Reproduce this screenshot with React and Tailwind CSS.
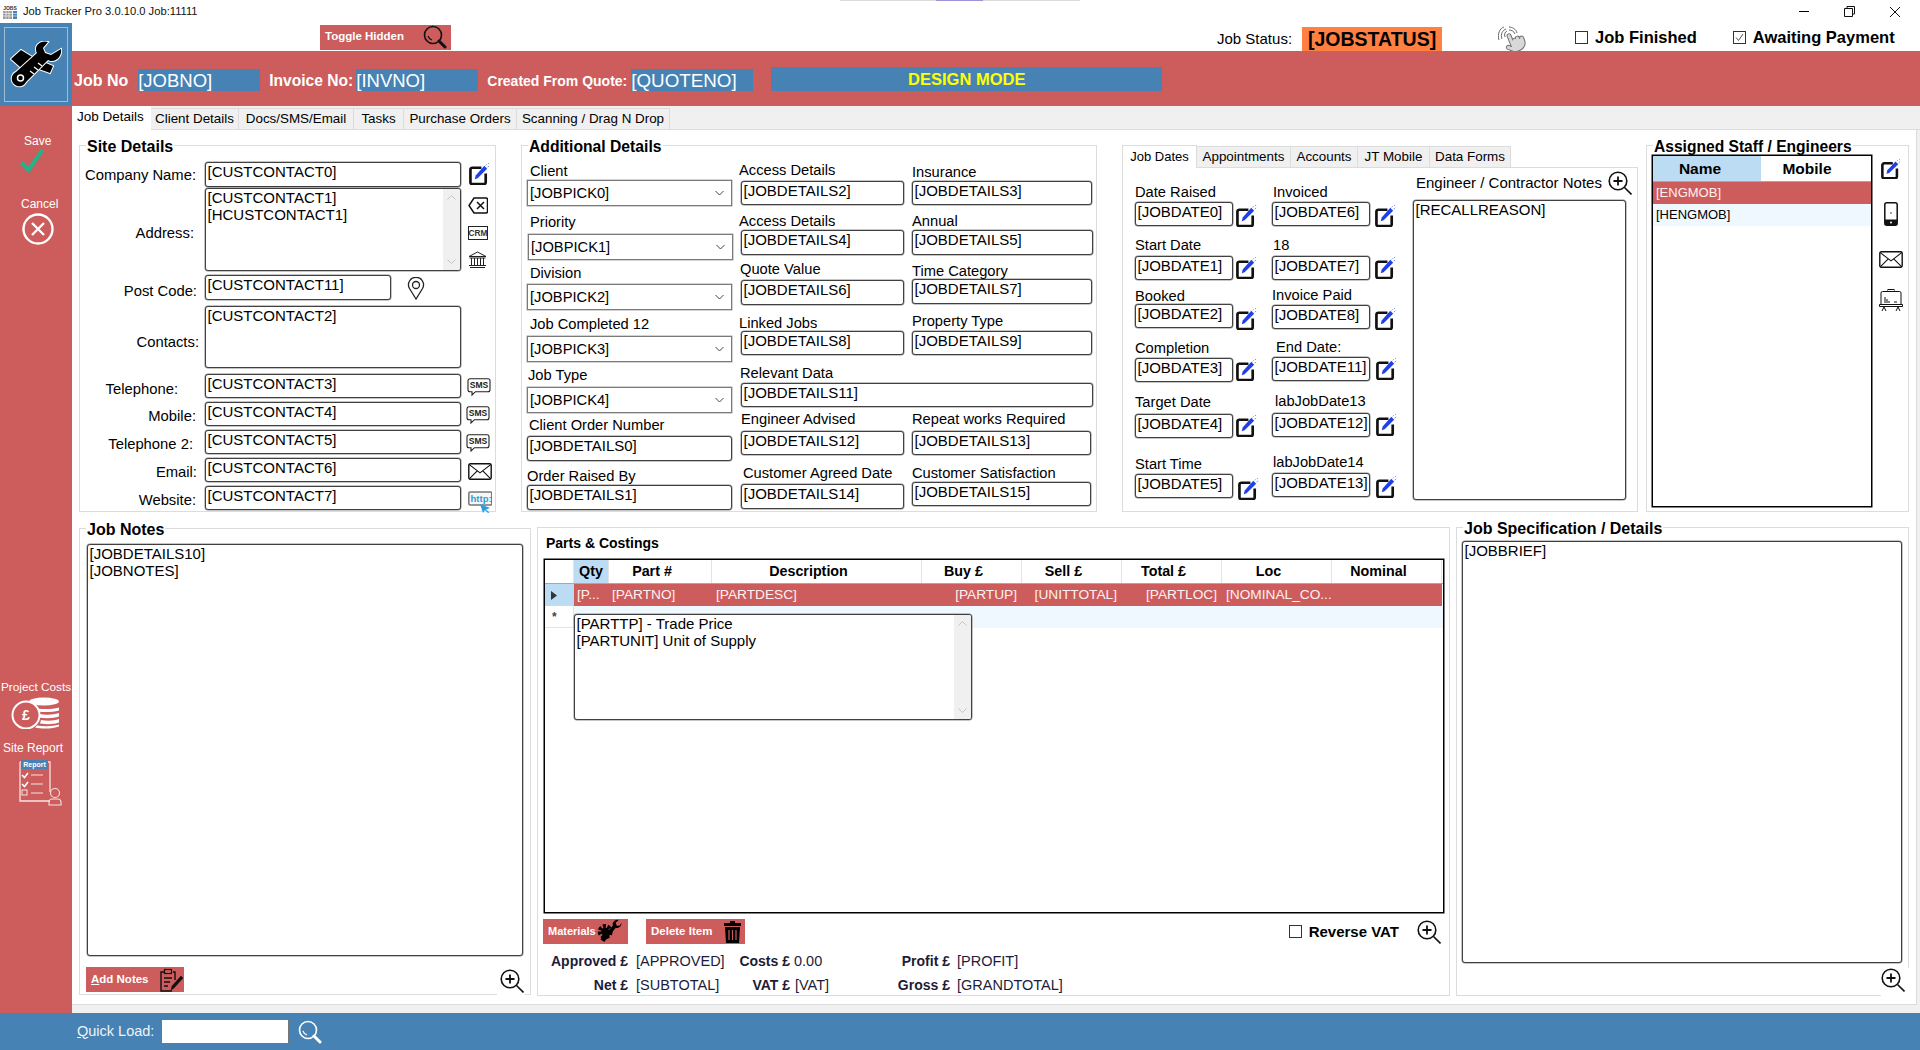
function EditIcon({ className = "h-[24px] w-[21px]" }) {
  return (
    <svg viewBox="0 0 22 24" preserveAspectRatio="none" className={`shrink-0 ${className}`}>
      <path d="M13 6H3.500A2 2 0 0 0 1.500 8v13a2 2 0 0 0 2 2h12a2 2 0 0 0 2-2V12" fill="none" stroke="#111" strokeWidth="2.800" />
      <path d="M6 18l1-4L16 4l3 3L9 17z" fill="#1f3fe8" />
      <path d="M17.500 3.500l1-1M19.500 5.500l1.500-1.500M20 2l1-1" stroke="#4a66f0" strokeWidth="0.800" />
    </svg>
  );
}

function ZoomPlus({ className = "" }) {
  return (
    <svg viewBox="0 0 24 24" className={`h-[24px] w-[24px] shrink-0 ${className}`} fill="none" stroke="#111">
      <circle cx="10" cy="10" r="8.800" strokeWidth="1.600" />
      <path d="M5.500 10h9M10 5.500v9" strokeWidth="1.800" />
      <path d="M16.500 16.500L23.500 23.500" strokeWidth="1.600" />
    </svg>
  );
}

function SearchIcon({ color = "#111", className = "" }) {
  return (
    <svg viewBox="0 0 24 24" className={`h-[24px] w-[24px] shrink-0 ${className}`} fill="none" stroke={color}>
      <circle cx="10" cy="10" r="8.500" strokeWidth="1.600" />
      <path d="M5 11a6 6 0 0 0 4 4" strokeWidth="1.200" />
      <path d="M16 16l6 6" strokeWidth="3" strokeLinecap="round" />
    </svg>
  );
}

function SmsIcon({ className = "" }) {
  return (
    <svg viewBox="0 0 24 18" className={`h-[18px] w-[24px] shrink-0 ${className}`}>
      <path d="M3 .7h18a2 2 0 0 1 2 2v9a2 2 0 0 1-2 2H8.500L5 17v-3.300H3a2 2 0 0 1-2-2v-9a2 2 0 0 1 2-2z" fill="#fff" stroke="#222" strokeWidth="1.100" />
      <text x="12" y="10.300" textAnchor="middle" fontSize="8.500" fontWeight="700" fontFamily="Liberation Sans" fill="#222">SMS</text>
    </svg>
  );
}

function Envelope({ className = "h-[18px] w-[24px]" }) {
  return (
    <svg viewBox="0 0 24 18" preserveAspectRatio="none" className={`shrink-0 ${className}`} fill="none" stroke="#111">
      <rect x="0.800" y="0.800" width="22.400" height="16.400" rx="1.500" strokeWidth="1.400" />
      <path d="M1 1.500l11 9 11-9M1 17l8.500-9M23 17l-8.500-9" strokeWidth="1.100" />
    </svg>
  );
}

function ScrollBar() {
  return (
    <div className="flex w-[17px] shrink-0 flex-col items-center justify-between bg-[#f0f0f0] py-[6px]">
      <svg viewBox="0 0 9 5" className="h-[5px] w-[9px]" fill="none" stroke="#c4c4c4" strokeWidth="1"><path d="M.5 4.500L4.500.5l4 4" /></svg>
      <svg viewBox="0 0 9 5" className="h-[5px] w-[9px]" fill="none" stroke="#c4c4c4" strokeWidth="1"><path d="M.5.5l4 4 4-4" /></svg>
    </div>
  );
}

function Box({ children, className = "", scroll = false }) {
  return (
    <div className={`flex shrink-0 overflow-hidden rounded-[3px] border border-[#404040] bg-white text-[15px] leading-[17px] shadow-[0_0_0_0.5px_#8c8c8c] ${className}`}>
      <div className="min-w-0 flex-1 whitespace-pre-line pl-[1.500px]">{children}</div>
      {scroll && <ScrollBar />}
    </div>
  );
}

function Select({ children, className = "" }) {
  return (
    <div className={`flex h-[26px] items-center justify-between border border-[#7a7a7a] bg-white pl-[2px] pr-[7px] text-[14.700px] shadow-[0_0_0_0.5px_#a8a8a8] ${className}`}>
      <span>{children}</span>
      <svg viewBox="0 0 9 6" className="h-[6px] w-[9px]" fill="none" stroke="#444" strokeWidth="1"><path d="M.5 1l4 4 4-4" /></svg>
    </div>
  );
}

function Label({ children, className = "" }) {
  return <div className={`h-[17px] whitespace-nowrap text-[14.700px] leading-[17px] ${className}`}>{children}</div>;
}

function Field({ label, labelClass, className = "", fieldClass = "", children }) {
  return (
    <div className={className}>
      <Label className={labelClass}>{label}</Label>
      <Box className={fieldClass}>{children}</Box>
    </div>
  );
}

function Pick({ label, labelClass, className = "", fieldClass = "", children }) {
  return (
    <div className={className}>
      <Label className={labelClass}>{label}</Label>
      <Select className={fieldClass}>{children}</Select>
    </div>
  );
}

function DateField({ label, labelClass, className = "", gap = "", iconClass = "ml-[3px]", children }) {
  return (
    <div className={className}>
      <Label className={labelClass}>{label}</Label>
      <div className={`flex h-[24px] items-start ${gap}`}>
        <Box className="h-[24px] w-[98px]">{children}</Box>
        <EditIcon className={`h-[23px] w-[21px] ${iconClass}`} />
      </div>
    </div>
  );
}

function SiteRow({ label, labelClass = "", className = "", fieldClass = "", value, scroll, children }) {
  return (
    <div className={`flex ${className}`}>
      <div className={`flex w-[125px] shrink-0 items-center justify-end whitespace-nowrap text-[14.800px] leading-[17px] ${labelClass}`}>{label}</div>
      <Box className={fieldClass} scroll={scroll}>{value}</Box>
      {children}
    </div>
  );
}

function Group({ title, titleClass = "text-[16px]", className = "", children }) {
  return (
    <div className={`shrink-0 border border-[#dcdcdc] bg-white ${className}`}>
      {title && <div className={`ml-[6px] -mt-[8px] h-[18px] w-fit whitespace-nowrap bg-white px-px font-bold leading-[18px] ${titleClass}`}>{title}</div>}
      {children}
    </div>
  );
}

function CheckBox({ checked = false, className = "" }) {
  return (
    <div className={`flex h-[13px] w-[13px] shrink-0 items-center justify-center border border-[#333] bg-white ${className}`}>
      {checked && <svg viewBox="0 0 11 11" className="h-[11px] w-[11px]" fill="none" stroke="#555" strokeWidth="1"><path d="M2 5.500l2.500 3L9 2" /></svg>}
    </div>
  );
}

function Logo() {
  return (
    <svg viewBox="0 0 52 48" className="h-[48px] w-[52px]">
      <g fill="#000" stroke="#fff" strokeWidth="2" paintOrder="stroke">
        <path d="M1 18L11 9l13 8 7 3 12 5-3 7-14-5-6 2-5 0-5-3z" />
        <path d="M51 8c1 6-3 12-9 12-2 0-3-.5-4-1L16 41a7.500 7.500 0 1 1-10-10L27 12c-1-1-1-3-1-4 0-5 6-9 12-7l-5 6 2 5 6 2z" />
      </g>
      <circle cx="10.500" cy="37" r="3" fill="none" stroke="#fff" strokeWidth="1.500" />
      <path d="M20 30l4 3M24 26l4 3M28 22l4 3" stroke="#fff" strokeWidth="1.200" />
    </svg>
  );
}

function Coins() {
  return (
    <svg viewBox="0 0 49 32" className="ml-[11px] h-[32px] w-[49px]">
      <ellipse cx="33" cy="4.500" rx="15" ry="4" fill="#fff" />
      <path d="M22 10.500c8 2 18 2 26 0v3c-8 2-18 2-26 0zM28 17c7 1 14 1 20-1v3.500c-6 2-13 2-20 1zM30 23c6 1 13 1 18-1v3.500c-5 2-12 2-19 1zM26 28.500c7 1 16 1 22-1v2c-5 2-16 3-24 1z" fill="#fff" />
      <circle cx="15" cy="18" r="13.500" fill="#cd5c5c" stroke="#fff" strokeWidth="2" />
      <text x="15" y="23" textAnchor="middle" fontSize="14" fontWeight="700" fontFamily="Liberation Sans" fill="#fff">£</text>
    </svg>
  );
}

function ReportIcon() {
  return (
    <svg viewBox="0 0 44 47" className="ml-[18px] h-[47px] w-[44px]" fill="none" stroke="#f5e3e3">
      <path d="M2 3h30v30M2 3v39h30" strokeWidth="1.300" />
      <rect x="3" y="1" width="27" height="9" fill="#4682b4" stroke="none" />
      <text x="16.500" y="8" textAnchor="middle" fontSize="7" fontWeight="700" fontFamily="Liberation Sans" fill="#fff" stroke="none">Report</text>
      <path d="M4 16l2.500 2.500L10 14M4 25l2.500 2.500L10 23" stroke="#fff" strokeWidth="1.600" />
      <path d="M13 16h12M13 25h12M13 34h12" strokeWidth="1" />
      <rect x="4" y="31" width="5" height="5" strokeWidth="1" />
      <circle cx="37" cy="34" r="4.500" strokeWidth="1.100" />
      <path d="M31 46v-3c0-2 2-3 3-3h6c1 0 3 1 3 3v3z" strokeWidth="1.100" />
    </svg>
  );
}

function HandIcon() {
  return (
    <svg viewBox="0 0 32 25" className="h-[25px] w-[32px] shrink-0">
      <g transform="translate(5 4) rotate(-22 12 12) scale(0.98)" fill="#d8d8d8" stroke="#6e6e6e" strokeWidth="1">
        <path d="M18 11a2 2 0 1 1 4 0v3a8 8 0 0 1-8 8h-2c-2.800 0-4.500-.86-5.990-2.340l-3.600-3.600a2 2 0 0 1 2.830-2.820L7 15V4a2 2 0 0 1 4 0v5a2 2 0 0 1 3 0 2 2 0 0 1 4 1z" />
      </g>
      <g fill="none" stroke="#666" strokeWidth="1">
        <path d="M1 14C-1 8 2 2 6 1M4 13C2 8 5 4 8 3M7 11c-1-3 0-5 2-6M11 1c3 0 7 2 8 6M11 4c2 0 5 1 6 4" />
      </g>
    </svg>
  );
}

function Tab({ children, className = "" }) {
  return <div className={`flex h-[21px] shrink-0 items-center justify-center whitespace-nowrap border border-b-0 border-l-0 border-[#dcdcdc] bg-[#f0f0f0] text-[13.400px] ${className}`}>{children}</div>;
}

const partColumns = [
  { name: "Qty", width: "w-[35px]", head: "bg-[#bcdcf4]", cell: "pl-[3px]", value: "[P..." },
  { name: "Part #", width: "w-[103px]", head: "pr-[16px]", cell: "pl-[3px]", value: "[PARTNO]" },
  { name: "Description", width: "w-[210px]", head: "pr-[16px]", cell: "pl-[4px]", value: "[PARTDESC]" },
  { name: "Buy £", width: "w-[100px]", head: "pr-[16px]", cell: "justify-end pr-[5px]", value: "[PARTUP]" },
  { name: "Sell £", width: "w-[100px]", head: "pr-[16px]", cell: "justify-end pr-[5px]", value: "[UNITTOTAL]" },
  { name: "Total £", width: "w-[100px]", head: "pr-[16px]", cell: "justify-end pr-[5px]", value: "[PARTLOC]" },
  { name: "Loc", width: "w-[110px]", head: "pr-[16px]", cell: "pl-[4px]", value: "[NOMINAL_CO..." },
  { name: "Nominal", width: "w-[110px]", head: "pr-[16px]", cell: "", value: "" },
];

function PartsGrid() {
  return (
    <div className="relative ml-[6px] mt-[7px] h-[354px] w-[900px] border border-black bg-white shadow-[0_0_0_0.5px_#000]">
      <div className="flex h-[24px] border-b border-[#a8a8a8]">
        <div className="w-[29px] shrink-0 border-r border-[#e4e4e4]" />
        {partColumns.map((col) => (
          <div key={col.name} className={`flex shrink-0 items-center justify-center border-r border-[#e4e4e4] text-[14.300px] font-bold ${col.width} ${col.head}`}>
            {col.name}
          </div>
        ))}
      </div>
      <div className="flex h-[22px] text-[13.700px] text-[#fdf2f2]">
        <div className="flex w-[29px] shrink-0 items-center bg-[#bcdcf4] pl-[6px]">
          <svg viewBox="0 0 6 9" className="h-[9px] w-[6px]"><path d="M0 0l6 4.500L0 9z" fill="#333" /></svg>
        </div>
        {partColumns.map((col) => (
          <div key={col.name} className={`flex shrink-0 items-center whitespace-nowrap bg-[#cd5c5c] ${col.width} ${col.cell}`}>
            {col.value}
          </div>
        ))}
      </div>
      <div className="flex h-[22px]">
        <div className="flex w-[29px] shrink-0 items-center border-b border-r border-[#e4e4e4] pl-[7px] text-[12px] font-bold text-[#444]">*</div>
        <div className="flex-1 bg-[#f0f8ff]" />
      </div>
      <Box scroll className="absolute left-[29px] top-[54px] h-[106px] w-[398px]">
        {"[PARTTP] - Trade Price\n[PARTUNIT] Unit of Supply"}
      </Box>
    </div>
  );
}

function Totals() {
  const labelClass = "flex items-center justify-end font-bold text-[14px]";
  return (
    <div className="mt-[5px] grid grid-cols-[85px_103px_59px_104px_56px_1fr] grid-rows-[24px_24px] text-[14.500px] text-[#1c1c3a]">
      <div className={labelClass}>Approved £</div>
      <div className="pl-[8px] leading-[24px]">[APPROVED]</div>
      <div className={labelClass}>Costs £</div>
      <div className="pl-[4px] leading-[24px]">0.00</div>
      <div className={labelClass}>Profit £</div>
      <div className="pl-[7px] leading-[24px]">[PROFIT]</div>
      <div className={labelClass}>Net £</div>
      <div className="pl-[8px] leading-[24px]">[SUBTOTAL]</div>
      <div className={labelClass}>VAT £</div>
      <div className="pl-[5px] leading-[24px]">[VAT]</div>
      <div className={labelClass}>Gross £</div>
      <div className="pl-[7px] leading-[24px]">[GRANDTOTAL]</div>
    </div>
  );
}

export default function App() {
  return (
    <div className="relative flex h-screen w-full flex-col overflow-hidden bg-white font-['Liberation_Sans',sans-serif] text-black">
      {/* title bar */}
      <div className="flex h-[23px] shrink-0 items-center">
        <svg viewBox="0 0 14 14" className="ml-[3px] h-[14px] w-[14px]">
          <text x="7" y="4.500" textAnchor="middle" fontSize="5" fontWeight="700" fontFamily="Liberation Sans" fill="#333">JOBS</text>
          <rect x="0" y="6" width="9" height="8" fill="#9a9a9a" />
          <rect x="10" y="6" width="4" height="8" fill="#4682b4" />
          <path d="M0 8.500h14M0 11h14M3 6v8M6 6v8" stroke="#fff" strokeWidth="0.600" />
        </svg>
        <span className="ml-[6px] text-[11.200px] text-[#111]">Job Tracker Pro 3.0.10.0 Job:11111</span>
        <div className="ml-auto flex items-center pr-[20px]">
          <div className="h-px w-[10px] bg-black" />
          <svg viewBox="0 0 11 11" className="ml-[35px] h-[11px] w-[11px]" fill="none" stroke="#111" strokeWidth="1">
            <path d="M3 2.500V.5h7.500v7.500H8.500M.5 2.500h8v8h-8z" />
          </svg>
          <svg viewBox="0 0 10 10" className="ml-[35px] h-[10px] w-[10px]" fill="none" stroke="#111" strokeWidth="1">
            <path d="M0 0l10 10M10 0L0 10" />
          </svg>
        </div>
      </div>
      <div className="absolute left-[840px] top-0 flex h-px w-[240px] bg-[#dcdcdc]">
        <div className="ml-[96px] w-[47px] bg-[#9a93d8]" />
      </div>

      <div className="flex min-h-0 flex-1">
        {/* left strip */}
        <div className="flex w-[72px] shrink-0 flex-col bg-[#cd5c5c] text-[12px] leading-[16px] text-white">
          <div className="h-[83px] shrink-0 bg-[#4682b4] p-[4px]">
            <div className="flex h-full w-full items-center justify-center border border-[#9dbcd6]">
              <Logo />
            </div>
          </div>
          <div className="ml-[24px] mt-[27px]">Save</div>
          <svg viewBox="0 0 24 24" className="ml-[20px] h-[24px] w-[24px]">
            <path d="M0 15l3-3 5 6L21 0l3 2L9 24z" fill="#1fb489" />
          </svg>
          <div className="ml-[21px] mt-[23px]">Cancel</div>
          <svg viewBox="0 0 32 32" className="ml-[22px] mt-px h-[32px] w-[32px]" fill="none" stroke="#fff">
            <circle cx="16" cy="16" r="14.500" strokeWidth="2.400" />
            <path d="M10 10l12 12M22 10L10 22" strokeWidth="2.400" />
          </svg>
          <div className="ml-px mt-[434px] whitespace-nowrap text-[11.800px]">Project Costs</div>
          <div className="mt-[2px]"><Coins /></div>
          <div className="ml-[3px] mt-[11px] whitespace-nowrap">Site Report</div>
          <div className="mt-[3px]"><ReportIcon /></div>
        </div>

        <div className="flex min-w-0 flex-1 flex-col bg-[#f0f0f0]">
          {/* toolbar */}
          <div className="flex h-[28px] shrink-0 items-start bg-white">
            <div className="ml-[248px] mt-[2px] flex h-[25px] w-[131px] items-center justify-between bg-[#cd5c5c] pb-[2px] pl-[5px] pr-[4px] text-[11.500px] font-bold text-white">
              <span>Toggle Hidden</span>
              <SearchIcon />
            </div>
            <span className="ml-[766px] mt-[7px] text-[15px] leading-[17px]">Job Status:</span>
            <div className="ml-[10px] mt-[4px] flex h-[24px] w-[140px] items-center justify-center bg-[#ff8040] text-[19.500px] font-bold leading-[24px]">[JOBSTATUS]</div>
            <div className="ml-[56px] mt-[3px]"><HandIcon /></div>
            <CheckBox className="ml-[45px] mt-[8px]" />
            <span className="ml-[7px] mt-[5px] whitespace-nowrap text-[16.500px] font-bold leading-[19px]">Job Finished</span>
            <CheckBox checked className="ml-[36px] mt-[8px]" />
            <span className="ml-[7px] mt-[5px] whitespace-nowrap text-[16.500px] font-bold leading-[19px]">Awaiting Payment</span>
          </div>

          {/* red header */}
          <div className="flex h-[55px] shrink-0 items-start bg-[#cd5c5c] pt-[18px] text-white">
            <span className="ml-[2px] mt-[2px] text-[16px] font-bold leading-[20px]">Job No</span>
            <div className="ml-[10px] h-[22px] w-[122px] bg-[#4682b4] text-[18.500px] leading-[24px]">[JOBNO]</div>
            <span className="ml-[9px] mt-[2px] text-[15.600px] font-bold leading-[20px]">Invoice No:</span>
            <div className="ml-[3px] h-[22px] w-[122px] bg-[#4682b4] text-[18.500px] leading-[24px]">[INVNO]</div>
            <span className="ml-[9px] mt-[2px] text-[14px] font-bold leading-[20px]">Created From Quote:</span>
            <div className="ml-[4px] h-[22px] w-[122px] bg-[#4682b4] text-[18.800px] leading-[24px]">[QUOTENO]</div>
            <div className="ml-[18px] -mt-[2px] flex h-[24px] w-[391px] items-center justify-center bg-[#4682b4] text-[16.500px] font-bold text-[#ffff00]">DESIGN MODE</div>
          </div>

          {/* main tabs */}
          <div className="flex h-[24px] shrink-0 items-end border-b border-[#dcdcdc]">
            <div className="z-10 -mb-px flex h-[24px] w-[79px] items-center bg-white pb-[2px] pl-[5px] text-[13.500px]">Job Details</div>
            <Tab className="w-[88px]">Client Details</Tab>
            <Tab className="w-[115px]">Docs/SMS/Email</Tab>
            <Tab className="w-[50px]">Tasks</Tab>
            <Tab className="w-[113px]">Purchase Orders</Tab>
            <Tab className="w-[153px]">Scanning / Drag N Drop</Tab>
          </div>

          {/* page body */}
          <div className="mb-[8px] mr-[3px] min-h-0 flex-1 border-b border-r border-[#dcdcdc] bg-white pl-[7px] pt-[15px]">
            <div className="flex h-[367px] items-start">
              <Group title="Site Details" className="h-[367px] w-[417px]">
                <SiteRow label="Company Name:" labelClass="pr-[9px] pt-[1px]" className="mt-[6px]" fieldClass="h-[25px] w-[256px]" value="[CUSTCONTACT0]">
                  <EditIcon className="ml-[8px] h-[23px] w-[21px]" />
                </SiteRow>
                <SiteRow label="Address:" labelClass="pr-[11px] pt-[8px]" className="mt-px h-[83px]" fieldClass="h-[83px] w-[256px]" scroll value={"[CUSTCONTACT1]\n[HCUSTCONTACT1]"}>
                  <div className="ml-[7px] mt-[9px] flex h-[83px] flex-col">
                    <svg viewBox="0 0 20 17" className="h-[17px] w-[20px]" fill="none" stroke="#111" strokeWidth="1.500">
                      <path d="M6 1h12a1.500 1.500 0 0 1 1.500 1.500v12A1.500 1.500 0 0 1 18 16H6L1 8.500z" />
                      <path d="M9 5l7 7M16 5l-7 7" />
                    </svg>
                    <svg viewBox="0 0 20 14" className="mt-[12px] h-[14px] w-[20px]">
                      <rect x="0.500" y="0.500" width="19" height="13" fill="#fff" stroke="#222" />
                      <text x="10" y="10" textAnchor="middle" fontSize="8.300" fontWeight="700" fontFamily="Liberation Sans" fill="#333">CRM</text>
                    </svg>
                    <svg viewBox="0 0 19 17" className="mt-[11px] h-[17px] w-[19px]" fill="none" stroke="#222" strokeWidth="1">
                      <path d="M1 5.500L9.500 1 18 5.500zM1.500 7h16M2 16.500h15M1 14.500h17" />
                      <path d="M3.500 7v7.500M6.500 7v7.500M9.500 7v7.500M12.500 7v7.500M15.500 7v7.500" />
                    </svg>
                  </div>
                </SiteRow>
                <SiteRow label="Post Code:" labelClass="pr-[8px] pt-[8px]" className="mt-[4px] h-[25px]" fieldClass="h-[25px] w-[186px]" value="[CUSTCONTACT11]">
                  <svg viewBox="0 0 18 23" className="ml-[16px] mt-[2px] h-[23px] w-[18px]" fill="none" stroke="#222" strokeWidth="1.300">
                    <path d="M9 22L2.500 11.500a7.500 7.500 0 1 1 13 0z" />
                    <circle cx="9" cy="8" r="3.500" />
                  </svg>
                </SiteRow>
                <SiteRow label="Contacts:" labelClass="pr-[6px] pt-[10px]" className="mt-[6px]" fieldClass="h-[62px] w-[256px]" value="[CUSTCONTACT2]" />
                <SiteRow label="Telephone:" labelClass="pr-[27px] pt-[6px]" className="mt-[6px] h-[24px]" fieldClass="h-[24px] w-[256px]" value="[CUSTCONTACT3]">
                  <SmsIcon className="ml-[6px] mt-[4px]" />
                </SiteRow>
                <SiteRow label="Mobile:" labelClass="pr-[9px] pt-[4px]" className="mt-[4px] h-[24px]" fieldClass="h-[24px] w-[256px]" value="[CUSTCONTACT4]">
                  <SmsIcon className="ml-[5px] mt-[4px]" />
                </SiteRow>
                <SiteRow label="Telephone 2:" labelClass="pr-[12px] pt-[4px]" className="mt-[4px] h-[24px]" fieldClass="h-[24px] w-[256px]" value="[CUSTCONTACT5]">
                  <SmsIcon className="ml-[5px] mt-[4px]" />
                </SiteRow>
                <SiteRow label="Email:" labelClass="pr-[8px] pt-[4px]" className="mt-[4px] h-[24px]" fieldClass="h-[24px] w-[256px]" value="[CUSTCONTACT6]">
                  <Envelope className="ml-[7px] mt-[5px] h-[17px] w-[24px]" />
                </SiteRow>
                <SiteRow label="Website:" labelClass="pr-[9px] pt-[4px]" className="mt-[4px] h-[24px]" fieldClass="h-[24px] w-[256px]" value="[CUSTCONTACT7]">
                  <svg viewBox="0 0 24 22" className="ml-[7px] mt-[5px] h-[22px] w-[24px]">
                    <rect x="0.800" y="1" width="23" height="13" rx="1.500" fill="#f6f6f6" stroke="#777" strokeWidth="1.500" />
                    <text x="2.500" y="11" fontSize="9.500" fontWeight="700" fontFamily="Liberation Sans" fill="#2a9de0">http:</text>
                    <path d="M12 13l10 4-4 1.500 3.500 3-1.500 .5-3-3-2 3z" fill="#2a9de0" />
                  </svg>
                </SiteRow>
              </Group>

              <Group title="Additional Details" titleClass="text-[15.700px]" className="ml-[25px] flex h-[367px] w-[576px] flex-wrap content-start">
                <div className="w-full" />
                <div className="ml-[5px] w-[206px]">
                  <Pick label="Client" labelClass="pl-[3px]" className="mt-[7px]" fieldClass="w-[205px]">[JOBPICK0]</Pick>
                  <Pick label="Priority" labelClass="pl-[3px]" className="mt-[8px]" fieldClass="ml-px mt-[3px] w-[205px]">[JOBPICK1]</Pick>
                  <Pick label="Division" labelClass="pl-[3px]" className="mt-[5px]" fieldClass="mt-[2px] w-[205px]">[JOBPICK2]</Pick>
                  <Pick label="Job Completed 12" labelClass="pl-[3px]" className="mt-[6px]" fieldClass="mt-[3px] h-[25px] w-[205px]">[JOBPICK3]</Pick>
                  <Pick label="Job Type" labelClass="pl-px" className="mt-[5px]" fieldClass="mt-[3px] h-[25px] w-[205px]">[JOBPICK4]</Pick>
                  <Field label="Client Order Number" labelClass="pl-[2px]" className="mt-[4px]" fieldClass="mt-[2px] h-[25px] w-[205px]">[JOBDETAILS0]</Field>
                  <Field label="Order Raised By" className="mt-[7px]" fieldClass="h-[25px] w-[205px]">[JOBDETAILS1]</Field>
                </div>
                <div className="ml-[8px] w-[352px]">
                  <div className="flex">
                    <div className="w-[171px]">
                      <Field label="Access Details" labelClass="-ml-[2px]" className="mt-[6px]" fieldClass="mt-[2px] h-[24px] w-[163px]">[JOBDETAILS2]</Field>
                      <Field label="Access Details" labelClass="-ml-[2px]" className="mt-[8px]" fieldClass="h-[25px] w-[163px]">[JOBDETAILS4]</Field>
                      <Field label="Quote Value" labelClass="-ml-px" className="mt-[6px]" fieldClass="mt-[2px] h-[25px] w-[163px]">[JOBDETAILS6]</Field>
                      <Field label="Linked Jobs" labelClass="-ml-[2px]" className="mt-[10px]" fieldClass="-mt-px h-[24px] w-[163px]">[JOBDETAILS8]</Field>
                    </div>
                    <div className="w-[181px]">
                      <Field label="Insurance" className="mt-[8px]" fieldClass="h-[24px] w-[180px]">[JOBDETAILS3]</Field>
                      <Field label="Annual" className="mt-[8px]" fieldClass="h-[25px] w-[181px]">[JOBDETAILS5]</Field>
                      <Field label="Time Category" className="mt-[8px]" fieldClass="-mt-px h-[25px] w-[180px]">[JOBDETAILS7]</Field>
                      <Field label="Property Type" className="mt-[9px]" fieldClass="mt-px h-[24px] w-[180px]">[JOBDETAILS9]</Field>
                    </div>
                  </div>
                  <Field label="Relevant Data" labelClass="-ml-px" className="mt-[10px]" fieldClass="mt-px h-[24px] w-[352px]">[JOBDETAILS11]</Field>
                  <div className="flex">
                    <div className="w-[171px]">
                      <Field label="Engineer Advised" className="mt-[4px]" fieldClass="mt-[3px] h-[24px] w-[163px]">[JOBDETAILS12]</Field>
                      <Field label="Customer Agreed Date" labelClass="ml-[2px]" className="mt-[10px]" fieldClass="mt-[2px] h-[25px] w-[163px]">[JOBDETAILS14]</Field>
                    </div>
                    <div className="w-[181px]">
                      <Field label="Repeat works Required" className="mt-[4px]" fieldClass="mt-[3px] h-[24px] w-[179px]">[JOBDETAILS13]</Field>
                      <Field label="Customer Satisfaction" className="mt-[10px]" fieldClass="h-[24px] w-[179px]">[JOBDETAILS15]</Field>
                    </div>
                  </div>
                </div>
              </Group>

              <div className="ml-[25px] flex h-[367px] w-[516px] shrink-0 flex-col">
                <div className="flex h-[22px] shrink-0 items-end">
                  <div className="z-10 -mb-px flex h-[23px] w-[75px] items-center justify-center border border-b-0 border-[#dcdcdc] bg-white text-[13px]">Job Dates</div>
                  <Tab className="w-[94px]">Appointments</Tab>
                  <Tab className="w-[67px]">Accounts</Tab>
                  <Tab className="w-[72px]">JT Mobile</Tab>
                  <Tab className="w-[81px]">Data Forms</Tab>
                </div>
                <div className="flex min-h-0 flex-1 border border-[#dcdcdc] bg-white pl-[12px]">
                  <div className="w-[137px] shrink-0">
                    <DateField label="Date Raised" className="mt-[16px]" gap="mt-px" iconClass="ml-[3px] mt-[2px]">[JOBDATE0]</DateField>
                    <DateField label="Start Date" className="mt-[11px]" gap="mt-[2px]" iconClass="ml-[3px]">[JOBDATE1]</DateField>
                    <DateField label="Booked" className="mt-[8px]" gap="-mt-px" iconClass="ml-[3px] mt-[3px]">[JOBDATE2]</DateField>
                    <DateField label="Completion" className="mt-[12px]" gap="mt-px" iconClass="ml-[3px]">[JOBDATE3]</DateField>
                    <DateField label="Target Date" className="mt-[12px]" gap="mt-[3px]" iconClass="ml-[3px]">[JOBDATE4]</DateField>
                    <DateField label="Start Time" className="mt-[18px]" gap="mt-px" iconClass="ml-[5px] mt-[3px]">[JOBDATE5]</DateField>
                  </div>
                  <div className="w-[141px] shrink-0">
                    <DateField label="Invoiced" labelClass="ml-px" className="mt-[16px]" gap="mt-px" iconClass="ml-[5px] mt-[2px]">[JOBDATE6]</DateField>
                    <DateField label="18" labelClass="ml-px" className="mt-[11px]" gap="mt-[2px]" iconClass="ml-[5px]">[JOBDATE7]</DateField>
                    <DateField label="Invoice Paid" className="mt-[7px]" gap="mt-px" iconClass="ml-[5px] mt-[2px]">[JOBDATE8]</DateField>
                    <DateField label="End Date:" labelClass="ml-[4px]" className="mt-[10px]" gap="mt-px" iconClass="ml-[6px]">[JOBDATE11]</DateField>
                    <DateField label="labJobDate13" labelClass="ml-[3px]" className="mt-[12px]" gap="mt-[3px]" iconClass="ml-[6px]">[JOBDATE12]</DateField>
                    <DateField label="labJobDate14" labelClass="ml-px" className="mt-[17px]" gap="mt-[2px]" iconClass="ml-[6px] mt-[2px]">[JOBDATE13]</DateField>
                  </div>
                  <div className="w-[214px] shrink-0">
                    <div className="mt-[3px] flex h-[24px] w-[219px] items-center justify-between pl-[3px]">
                      <span className="whitespace-nowrap text-[15px]">Engineer / Contractor Notes</span>
                      <ZoomPlus />
                    </div>
                    <Box className="mt-[5px] h-[300px] w-[213px]">[RECALLREASON]</Box>
                  </div>
                </div>
              </div>

              <Group title="Assigned Staff / Engineers" titleClass="text-[15.600px]" className="ml-[8px] flex h-[367px] w-[263px] flex-wrap content-start">
                <div className="w-full" />
                <div className="ml-[5px] -mt-px flex h-[352px] w-[220px] flex-col border border-black shadow-[0_0_0_0.5px_#000]">
                  <div className="flex h-[26px] shrink-0 border-b border-[#a8a8a8] text-[15.500px] font-bold">
                    <div className="flex w-[108px] items-center justify-center bg-[#bcdcf4] pr-[14px]">Name</div>
                    <div className="flex flex-1 items-center justify-center pr-[18px]">Mobile</div>
                  </div>
                  <div className="flex h-[22px] items-center bg-[#cd5c5c] pl-[3px] text-[13px] text-[#fdf2f2]">[ENGMOB]</div>
                  <div className="flex h-[22px] items-center bg-[#f0f8ff] pl-[3px] text-[13px]">[HENGMOB]</div>
                </div>
                <div className="ml-[7px] flex -mt-[2px] w-[24px] flex-col items-center">
                  <EditIcon className="mt-[4px] h-[21px] w-[20px]" />
                  <svg viewBox="0 0 14 24" className="mt-[23px] h-[24px] w-[14px]">
                    <rect x="0.800" y="0.800" width="12.400" height="22.400" rx="2" fill="#fff" stroke="#111" strokeWidth="1.500" />
                    <rect x="1" y="17.500" width="12" height="5.500" fill="#111" />
                    <circle cx="7" cy="20.500" r="1" fill="#fff" />
                    <path d="M6 11h2" stroke="#111" strokeWidth="0.800" />
                  </svg>
                  <Envelope className="mt-[25px] h-[17px] w-[24px]" />
                  <svg viewBox="0 0 24 23" className="mt-[21px] h-[23px] w-[24px]" fill="none" stroke="#111" strokeWidth="1">
                    <path d="M2 15V4a1.500 1.500 0 0 1 1.500-1.500h17A1.500 1.500 0 0 1 22 4v11M.5 15.500h23v2h-23z" />
                    <rect x="9" y="0.500" width="6" height="2" />
                    <path d="M6 14V8M8 14v-4M10 14v-2M15 13h3M5 18l-2 4M5 18l2 4M19 18l-2 4M19 18l2 4" />
                  </svg>
                </div>
              </Group>
            </div>

            <div className="mt-[15px] flex items-start">
              <Group title="Job Notes" className="mt-px h-[467px] w-[452px]">
                <Box className="ml-[7px] mt-[5px] h-[412px] w-[436px]">{"[JOBDETAILS10]\n[JOBNOTES]"}</Box>
                <div className="ml-[6px] mt-[11px] flex items-start justify-between pr-[5px]">
                  <div className="flex h-[25px] w-[98px] items-center bg-[#cd5c5c] pl-[5px] text-[11.500px] font-bold text-white">
                    <span><span className="underline">A</span>dd Notes</span>
                    <svg viewBox="0 0 24 24" className="ml-[10px] h-[24px] w-[24px] shrink-0" fill="none" stroke="#111">
                      <path d="M14 4h2v8M6 4H2v19h11" strokeWidth="1.400" />
                      <rect x="5.500" y="1.500" width="7" height="4" strokeWidth="1.200" />
                      <path d="M5 10h8M5 14h6M5 18h4" strokeWidth="1.300" />
                      <path d="M12 22l1-4 9-10 2 2-9 10z" fill="#111" strokeWidth="0.500" />
                    </svg>
                  </div>
                  <div className="z-10 mt-[2px] h-[30px] w-[28px] bg-white"><ZoomPlus className="ml-[3px]" /></div>
                </div>
              </Group>

              <Group className="ml-[6px] h-[469px] w-[913px]">
                <div className="ml-[8px] mt-[7px] h-[17px] text-[14px] font-bold leading-[17px]">Parts &amp; Costings</div>
                <PartsGrid />
                <div className="ml-[5px] mt-[6px] flex h-[25px] items-start">
                  <div className="flex h-[25px] w-[85px] items-center bg-[#cd5c5c] pl-[5px] text-[11px] font-bold text-white">
                    <span>Materials</span>
                    <svg viewBox="0 0 27 26" className="h-[25px] w-[27px] shrink-0">
                      <circle cx="9" cy="13" r="5.500" fill="none" stroke="#000" strokeWidth="4.500" strokeDasharray="3 1.600" />
                      <circle cx="9" cy="13" r="4" fill="#000" />
                      <path d="M26 4c0 4-3 6-6 5L8 24l-4-3L17 7c-1-3 2-7 6-6l-3 3 1 3 3 0z" fill="#000" />
                    </svg>
                  </div>
                  <div className="ml-[18px] flex h-[25px] w-[99px] items-center bg-[#cd5c5c] pl-[5px] text-[11.500px] font-bold text-white">
                    <span>Delete Item</span>
                    <svg viewBox="0 0 19 22" className="ml-[11px] h-[22px] w-[19px] shrink-0">
                      <path d="M7 0h5v2h6v3H1V2h6z" fill="#000" />
                      <path d="M2 6h15l-1 16H3z" fill="#000" />
                      <path d="M6 9v10M9.500 9v10M13 9v10" stroke="#cd5c5c" strokeWidth="1.200" />
                    </svg>
                  </div>
                  <CheckBox className="ml-auto mt-[6px]" />
                  <span className="ml-[7px] mt-[4px] text-[15px] font-bold leading-[17px]">Reverse VAT</span>
                  <ZoomPlus className="ml-[18px] mr-[8px] mt-px" />
                </div>
                <div className="ml-[5px]"><Totals /></div>
              </Group>

              <Group title="Job Specification / Details" className="ml-[6px] h-[469px] w-[453px]">
                <Box className="ml-[5px] mt-[3px] h-[422px] w-[440px]">[JOBBRIEF]</Box>
                <div className="relative z-10 ml-[424px] mt-[5px] h-[30px] w-[28px] bg-white"><ZoomPlus /></div>
              </Group>
            </div>
          </div>
        </div>
      </div>

      {/* quick load bar */}
      <div className="flex h-[37px] shrink-0 items-center bg-[#4682b4] text-[14.500px] text-[#eef2f6]">
        <span className="ml-[77px]"><span className="underline">Q</span>uick Load:</span>
        <div className="ml-[7px] h-[25px] w-[128px] border border-[#777] bg-white" />
        <SearchIcon color="#fff" className="ml-[9px]" />
      </div>
    </div>
  );
}
